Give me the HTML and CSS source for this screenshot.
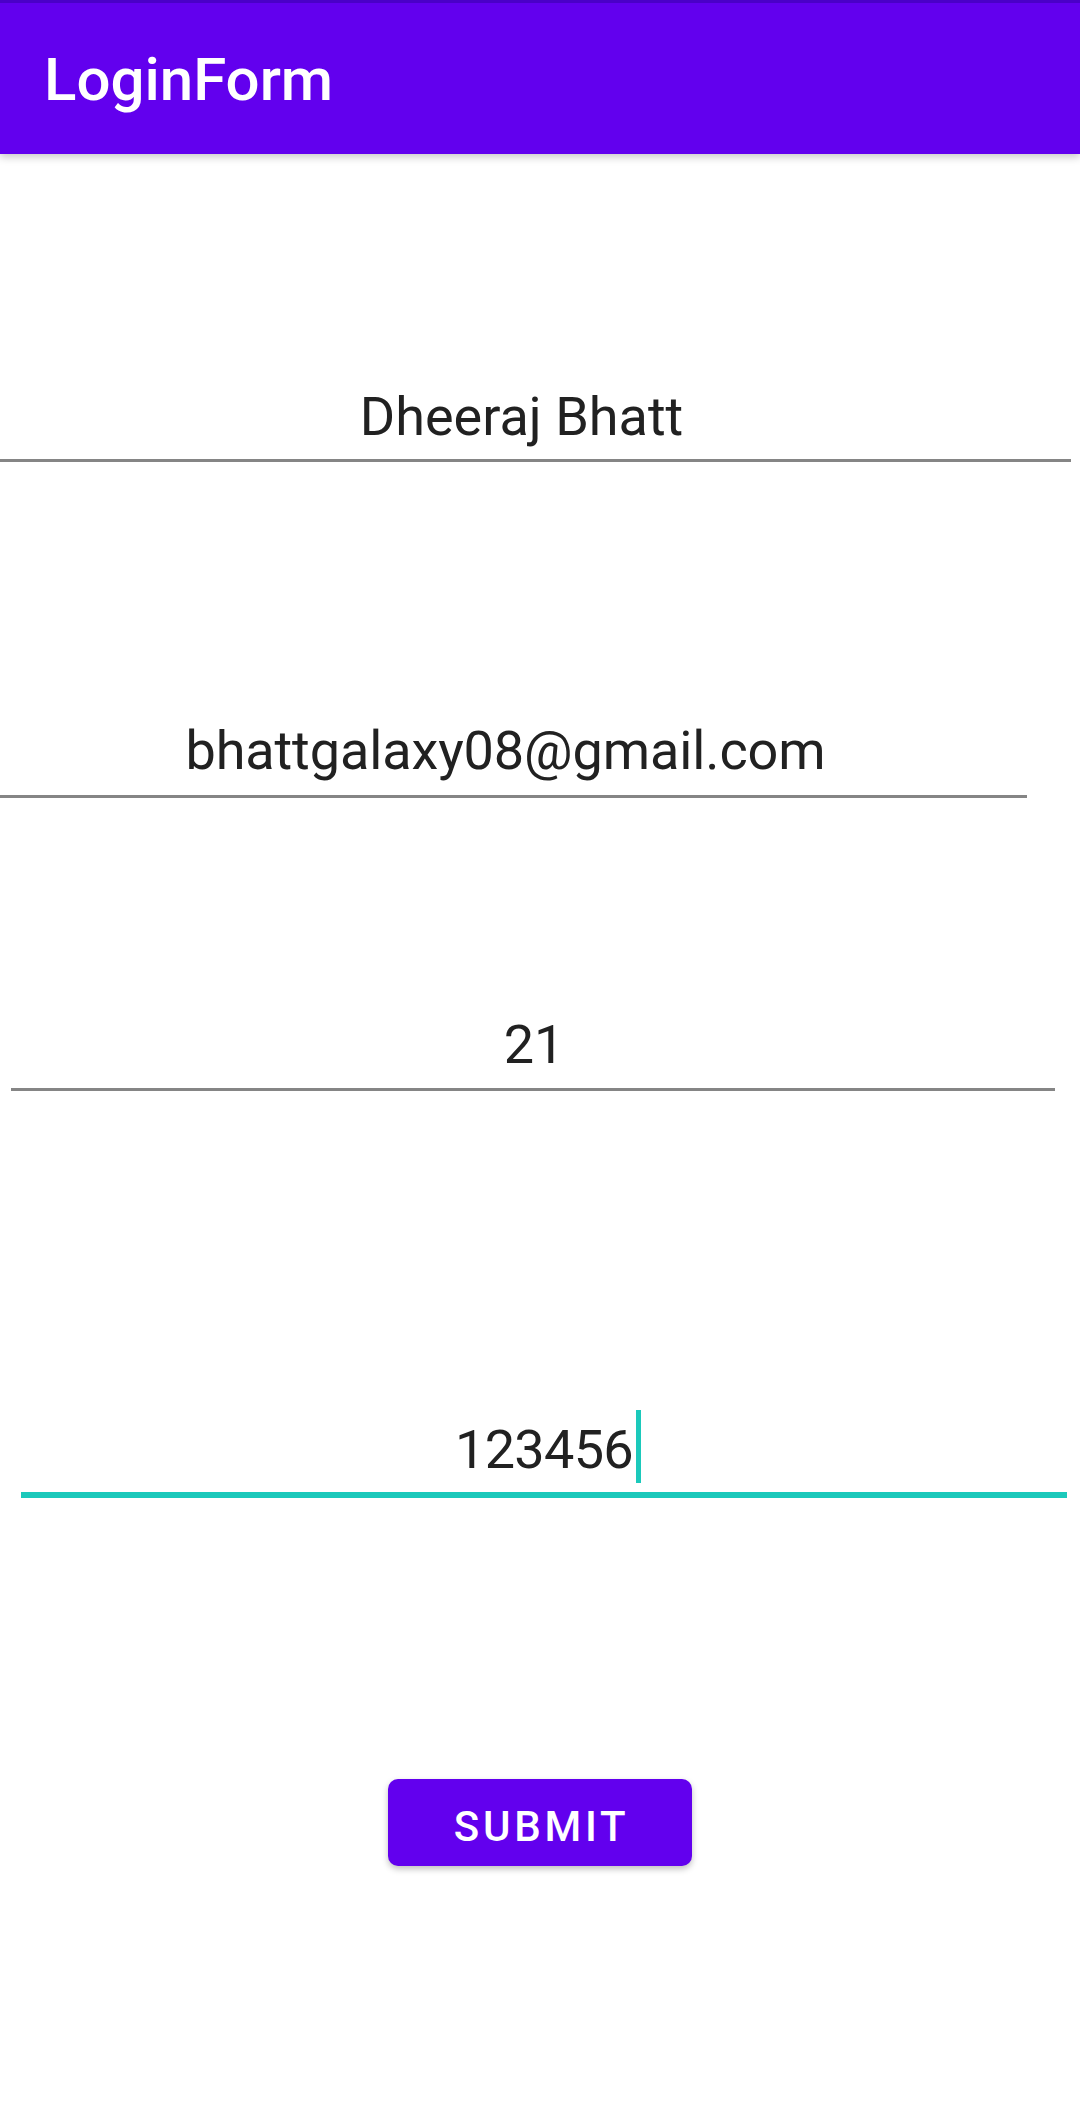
FILE: index.html
```html
<!DOCTYPE html>
<html>
<head>
<meta charset="utf-8">
<link rel="stylesheet" href="styles.css">
</head>
<body>
<header class="appbar"><h1 class="title">LoginForm</h1></header>
<main class="form">
  <div class="field field-name">Dheeraj Bhatt</div>
  <div class="field field-email">bhattgalaxy08@gmail.com</div>
  <div class="field field-age">21</div>
  <div class="field field-pass focused">123456<span class="cursor"></span></div>
  <div class="actions"><button class="submit">SUBMIT</button></div>
</main>
</body>
</html>
```
FILE: styles.css
```css
html, body {
  margin: 0;
  padding: 0;
  background: #ffffff;
}
body {
  width: 1080px;
  height: 2120px;
  overflow: hidden;
  font-family: Roboto, "Noto Sans", sans-serif;
}
.appbar {
  position: relative;
  z-index: 2;
  height: 154px;
  box-sizing: border-box;
  background: #6200ee;
  border-top: 3px solid #4a00c8;
  box-shadow: 0 3px 8px rgba(0, 0, 0, 0.22);
}
.title {
  margin: 0;
  padding: 41px 0 0 44px;
  font-size: 60px;
  line-height: 72px;
  font-weight: 500;
  color: #ffffff;
}
.form {
  display: flex;
  flex-direction: column;
}
.field {
  box-sizing: border-box;
  font-size: 54px;
  line-height: 64px;
  color: #212121;
  text-align: center;
  border-bottom: 3px solid #858585;
  white-space: nowrap;
}
.field-name {
  margin: 231px 0 0 0;
  width: 1071px;
  padding: 0 28px 10px 0;
}
.field-email {
  margin: 257px 0 0 0;
  width: 1027px;
  padding: 0 16px 12px 0;
  letter-spacing: -0.1px;
}
.field-age {
  margin: 215px 0 0 11px;
  width: 1044px;
  padding: 0 0 11px 2px;
}
.field-pass {
  margin: 327px 0 0 21px;
  width: 1046px;
  padding: 0 0 10px 8px;
  letter-spacing: -0.7px;
}
.focused {
  border-bottom: 6px solid #1bc9bb;
}
.cursor {
  display: inline-block;
  width: 5px;
  height: 73px;
  margin: -10px 0 -2px 3px;
  vertical-align: -13px;
  background: #1bc9bb;
}
.actions {
  display: flex;
  justify-content: center;
  margin-top: 281px;
}
.submit {
  width: 304px;
  height: 87px;
  box-sizing: border-box;
  padding: 8px 0 0 3px;
  border: none;
  border-radius: 10px;
  background: #6200ee;
  color: #ffffff;
  font-family: Roboto, "Noto Sans", sans-serif;
  font-size: 42px;
  line-height: 79px;
  font-weight: 500;
  letter-spacing: 3.75px;
  box-shadow: 0 3px 6px rgba(0, 0, 0, 0.25);
}
```
